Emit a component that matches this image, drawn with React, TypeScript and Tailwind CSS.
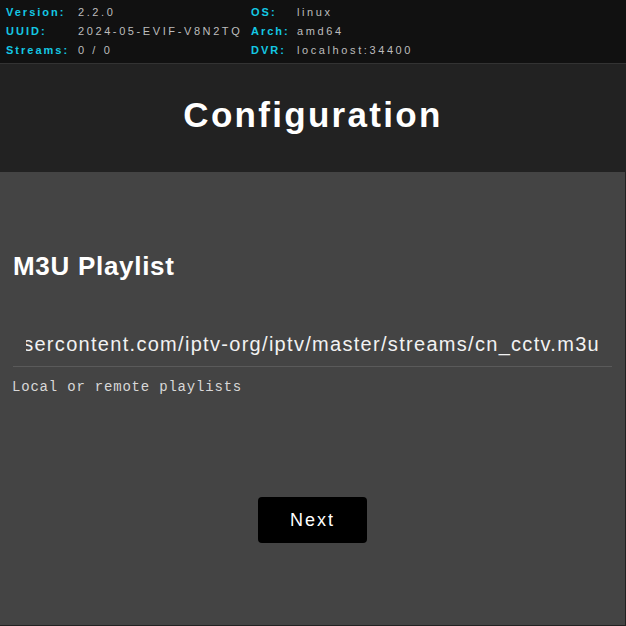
import React from "react";

const rows: [string, string, string, string][] = [
  ["Version:", "2.2.0", "OS:", "linux"],
  ["UUID:", "2024-05-EVIF-V8N2TQ", "Arch:", "amd64"],
  ["Streams:", "0 / 0", "DVR:", "localhost:34400"],
];

export default function App() {
  return (
    <div className="w-[626px] h-[626px] bg-[#222] overflow-hidden" style={{ fontFamily: '"Liberation Sans", Arial, sans-serif' }}>
      <div className="h-[64px] bg-[#111] border-b border-[#333] pt-[3px] pl-[6px]">
        {rows.map((r, i) => (
          <div key={i} className="grid grid-cols-[72px_173px_46px_1fr] h-[19px] items-center text-[11px] leading-none">
            <span className="font-bold text-[#14c8e4] tracking-[2px]">{r[0]}</span>
            <span className="text-[#bdbdbd] tracking-[2.6px]">{r[1]}</span>
            <span className="font-bold text-[#14c8e4] tracking-[2px]">{r[2]}</span>
            <span className="text-[#bdbdbd] tracking-[2.6px]">{r[3]}</span>
          </div>
        ))}
      </div>
      <div className="h-[108px] flex items-center justify-center pb-[7px]">
        <h1 className="text-[35px] font-bold text-white tracking-[2.3px] leading-none">Configuration</h1>
      </div>
      <div className="w-[625px] h-[453px] bg-[#444] px-[13px] flex flex-col">
        <h2 className="mt-[80px] h-[28px] leading-[28px] text-[26px] font-bold text-white tracking-[0.7px]">M3U Playlist</h2>
        <div className="mt-[42px] h-[45px] border-b border-[#5a5a5a] pl-[13px] pr-[12px] flex items-center">
          <div className="flex-1 flex justify-end overflow-hidden">
            <span className="whitespace-nowrap text-[20px] text-[#f2f2f2] tracking-[1.3px]">
              https://raw.githubusercontent.com/iptv-org/iptv/master/streams/cn_cctv.m3u
            </span>
          </div>
        </div>
        <p className="mt-[10px] -ml-px text-[14px] leading-[20px] text-[#d8d8d8] tracking-[0.8px]" style={{ fontFamily: '"Liberation Mono", monospace' }}>
          Local or remote playlists
        </p>
        <div className="mt-[100px] flex justify-center">
          <button className="w-[109px] h-[46px] bg-black rounded-[4px] text-white text-[18px] tracking-[2px]">Next</button>
        </div>
      </div>
    </div>
  );
}
